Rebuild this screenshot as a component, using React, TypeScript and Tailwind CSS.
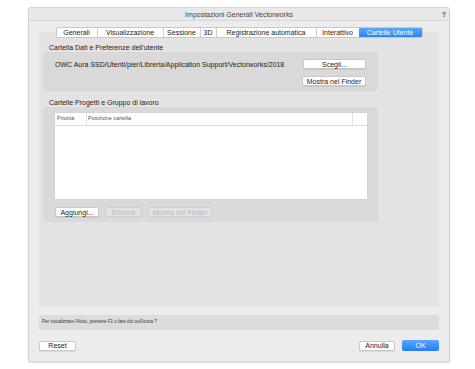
import React from "react";

const F = { fontFamily: '"Liberation Sans", Arial, sans-serif' };

function Btn({ children, w, disabled }: { children: React.ReactNode; w: string; disabled?: boolean }) {
  return (
    <div
      className={`${w} h-[10px] flex items-center justify-center rounded-[2px] text-[7px] leading-none ${
        disabled
          ? "bg-[#e2e2e2] text-[#b8b8b8] border border-[#cfcfcf]"
          : "bg-white text-[#222] border border-[#c8c8c8] shadow-[0_0.5px_0.5px_rgba(0,0,0,0.15)]"
      }`}
    >
      {children}
    </div>
  );
}

const tabs: { label: string; w: string; active?: boolean }[] = [
  { label: "Generali", w: "w-[40px]" },
  { label: "Visualizzazione", w: "w-[66px]" },
  { label: "Sessione", w: "w-[37px]" },
  { label: "3D", w: "w-[16px]" },
  { label: "Registrazione automatica", w: "w-[100px]" },
  { label: "Interattivo", w: "w-[43px]" },
  { label: "Cartelle Utente", w: "w-[63px]", active: true },
];

export default function App() {
  return (
    <div className="w-[475px] h-[369px] bg-white overflow-hidden" style={F}>
      <div className="ml-[28px] mt-[7px] w-[422px] h-[355px] bg-[#ececec] border border-[#d4d4d4] rounded-t-[3px] flex flex-col shadow-[0_1px_2px_rgba(0,0,0,0.12)]">
        {/* title bar */}
        <div className="h-[13px] flex items-center relative bg-[#e8e8e8] border-b border-[#d8d8d8] rounded-t-[3px]">
          <div className="flex-1 text-center text-[7px] text-[#444] leading-none">Impostazioni Generali Vectorworks</div>
          <div className="absolute right-[3px] top-[3px] text-[7px] font-bold text-[#555] leading-none">?</div>
        </div>
        <div className="px-[10px] pt-[6px] flex flex-col">
          {/* tabs */}
          <div className="flex justify-center relative z-10 -mb-[6px]">
            <div className="flex h-[11px] rounded-[2px] border border-[#c8c8c8] bg-white overflow-hidden">
              {tabs.map((t, i) => (
                <div
                  key={t.label}
                  className={`${t.w} h-full flex items-center justify-center text-[7px] leading-none ${
                    t.active
                      ? "bg-[linear-gradient(#5aa6fb,#2a86f6)] text-white"
                      : `text-[#222] ${i > 0 ? "border-l border-[#cfcfcf]" : ""}`
                  }`}
                >
                  {t.label}
                </div>
              ))}
            </div>
          </div>
          {/* tab box */}
          <div className="h-[275px] bg-[#e3e3e3] rounded-[3px] pt-[10px] px-[4px]">
            <div className="h-[10px] flex items-center pl-[6px] text-[7px] text-[#222] leading-none">
              Cartella Dati e Preferenze dell'utente
            </div>
            <div className="w-[335px] h-[39px] bg-[#d9d9d9] rounded-[3px] flex pt-[7px] pl-[12px] pr-[12px]">
              <div className="flex-1 h-[10px] flex items-center text-[7px] text-[#222] leading-none">
                OWC Aura SSD/Utenti/pier/Libreria/Application Support/Vectorworks/2018
              </div>
              <div className="flex flex-col items-end gap-[7px]">
                <Btn w="w-[63px]">Scegli...</Btn>
                <Btn w="w-[64px]">Mostra nel Finder</Btn>
              </div>
            </div>
            <div className="h-[10px] mt-[6px] flex items-center pl-[6px] text-[7px] text-[#222] leading-none">
              Cartelle Progetti e Gruppo di lavoro
            </div>
            <div className="w-[335px] h-[115px] bg-[#d9d9d9] rounded-[3px] pt-[6px] pl-[12px]">
              <div className="w-[312px] h-[86px] bg-white flex flex-col shadow-[0_0_0_0.5px_#d0d0d0]">
                <div className="h-[13px] flex border-b border-[#dcdcdc]">
                  <div className="w-[32px] border-r border-[#e2e2e2] flex items-center pl-[2px] text-[5.5px] text-[#555] leading-none">
                    Priorità
                  </div>
                  <div className="flex-1 border-r border-[#e2e2e2] flex items-center pl-[1px] text-[5.5px] text-[#555] leading-none">
                    Posizione cartella
                  </div>
                  <div className="w-[14px]" />
                </div>
              </div>
              <div className="flex mt-[8px] gap-[6px]">
                <Btn w="w-[44px]">Aggiungi...</Btn>
                <Btn w="w-[37px]" disabled>
                  Elimina
                </Btn>
                <Btn w="w-[64px]" disabled>
                  Mostra nel Finder
                </Btn>
              </div>
            </div>
          </div>
          {/* help */}
          <div className="mt-[8px] h-[15px] bg-[#dcdcdc] rounded-[2px] flex items-center pl-[3px] text-[4.5px] text-[#333] leading-none">
            Per visualizzare l'Aiuto, premere F1 o fare clic sull'icona ?
          </div>
          {/* bottom buttons */}
          <div className="mt-[10px] flex items-center">
            <Btn w="w-[37px]">Reset</Btn>
            <div className="flex-1" />
            <Btn w="w-[36px]">Annulla</Btn>
            <div className="w-[7px]" />
            <div className="w-[37px] h-[11px] rounded-[2px] bg-[linear-gradient(#5aa6fb,#1f80f5)] text-white text-[7px] leading-none flex items-center justify-center">
              OK
            </div>
          </div>
        </div>
      </div>
    </div>
  );
}
